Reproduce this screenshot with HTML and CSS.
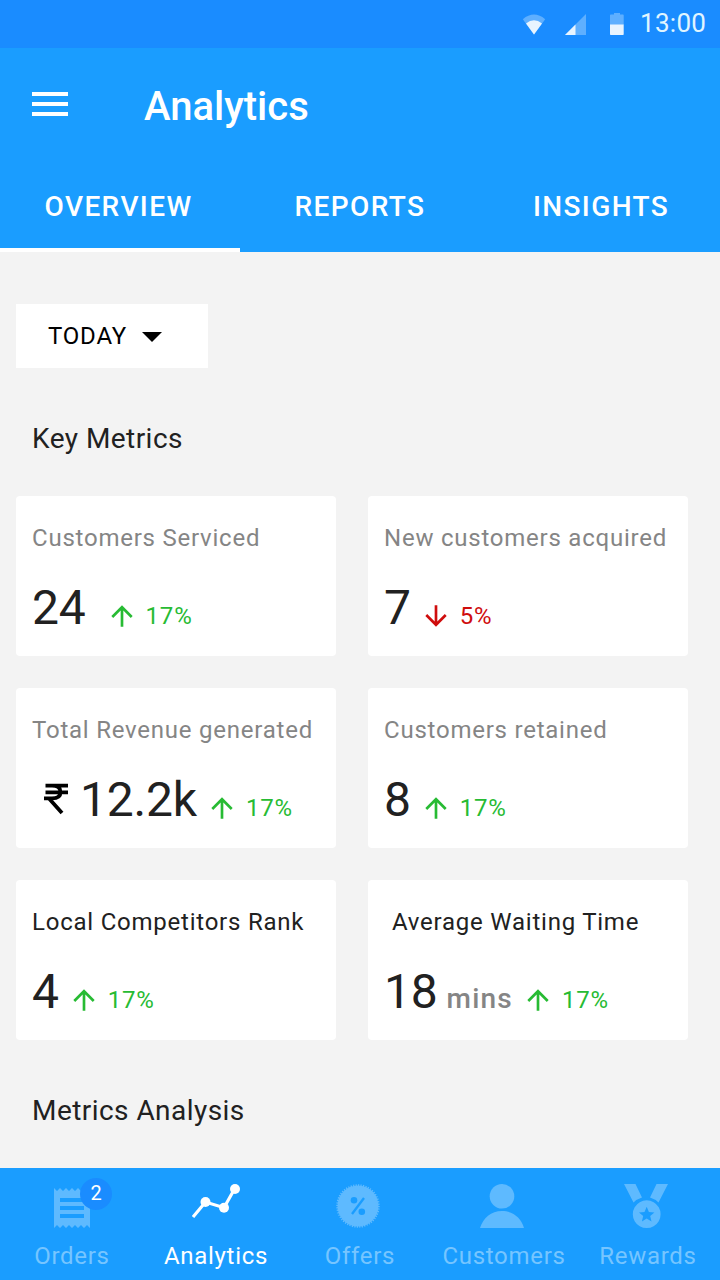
FILE: index.html
```html
<!DOCTYPE html>
<html lang="en">
<head>
<meta charset="utf-8">
<title>Analytics</title>
<link rel="stylesheet" href="styles.css">
</head>
<body>
<svg class="defs" width="0" height="0">
  <symbol id="arrow-up" viewBox="0 0 24 24"><path d="M4 12l1.41 1.41L11 7.83V20h2V7.83l5.58 5.59L20 12l-8-8z"/></symbol>
  <symbol id="arrow-down" viewBox="0 0 24 24"><path d="M20 12l-1.41-1.41L13 16.17V4h-2v12.17l-5.58-5.59L4 12l8 8z"/></symbol>
</svg>
<div class="screen">
  <div class="status-bar">
    <svg class="status-wifi" width="24" height="22" viewBox="0 0 24 22"><path class="dim" d="M.8 5.2Q12-4 23.2 5.2L12 20.5z"/><path class="lit" d="M4 9.500Q12 2.800 20 9.500L12 20.5z"/></svg>
    <svg class="status-signal" width="21" height="21" viewBox="0 0 21 21"><path class="dim" d="M21 0v21H0z"/><path class="lit" d="M10.500 10.500V21H0z"/></svg>
    <svg class="status-battery" width="14" height="22" viewBox="0 0 14 22"><path class="dim" d="M4 0h6v1.500h3q.7 0 .7.7V12H0V2.200q0-.7.700-.7H4z"/><path class="lit" d="M0 11.500h13.700v9.800q0 .7-.7.700H.7q-.7 0-.7-.7z"/></svg>
    <span class="clock">13:00</span>
  </div>
  <header class="app-bar">
    <svg class="menu" width="36" height="24" viewBox="0 0 36 24"><path d="M0 0h36v4H0zM0 10h36v4H0zM0 20h36v4H0z"/></svg>
    <h1 class="title">Analytics</h1>
  </header>
  <nav class="tabs">
    <a class="tab tab-active">OVERVIEW</a>
    <a class="tab">REPORTS</a>
    <a class="tab tab-last">INSIGHTS</a>
  </nav>
  <main class="content">
    <button class="period">TODAY<svg width="20" height="10" viewBox="0 0 20 10"><path d="M0 0h20L10 10z"/></svg></button>
    <h2 class="section-title">Key Metrics</h2>
    <section class="metrics">
      <article class="card">
        <div class="label">Customers Serviced</div>
        <div class="row"><span class="value value-wide">24</span><span class="trend up"><svg><use href="#arrow-up"/></svg>17%</span></div>
      </article>
      <article class="card">
        <div class="label">New customers acquired</div>
        <div class="row"><span class="value">7</span><span class="trend down"><svg><use href="#arrow-down"/></svg>5%</span></div>
      </article>
      <article class="card">
        <div class="label">Total Revenue generated</div>
        <div class="row"><svg class="rupee" width="24" height="32" viewBox="0 0 24 32"><path d="M1.500 2.700H24M1.500 9.300H24M0 15.400H8Q16.500 15.400 16.500 9Q16.500 2.700 8 2.700M5 15.400L18 30"/></svg><span class="value">12.2k</span><span class="trend up"><svg><use href="#arrow-up"/></svg>17%</span></div>
      </article>
      <article class="card">
        <div class="label">Customers retained</div>
        <div class="row"><span class="value">8</span><span class="trend up"><svg><use href="#arrow-up"/></svg>17%</span></div>
      </article>
      <article class="card">
        <div class="label label-dark">Local Competitors Rank</div>
        <div class="row"><span class="value">4</span><span class="trend up"><svg><use href="#arrow-up"/></svg>17%</span></div>
      </article>
      <article class="card">
        <div class="label label-dark label-indent">Average Waiting Time</div>
        <div class="row"><span class="value">18</span><span class="unit">mins</span><span class="trend up"><svg><use href="#arrow-up"/></svg>17%</span></div>
      </article>
    </section>
    <h2 class="section-title">Metrics Analysis</h2>
  </main>
  <nav class="bottom-nav">
    <a class="nav-item">
      <svg width="48" height="48" viewBox="0 0 48 48"><path fill-rule="evenodd" d="M6 4l3 3 3-3 3 3 3-3 3 3 3-3 3 3 3-3 3 3 3-3 3 3 3-3v40l-3-3-3 3-3-3-3 3-3-3-3 3-3-3-3 3-3-3-3 3-3-3-3 3zM12 14v4h24v-4zM12 22v4h24v-4zM12 30v4h24v-4z"/></svg>
      <span class="badge">2</span>
      <span class="nav-label">Orders</span>
    </a>
    <a class="nav-item nav-active">
      <svg width="48" height="48" viewBox="0 0 48 48"><path class="line" d="M1 33L13.500 18L32 23.700L42.500 5"/><circle cx="13.500" cy="18" r="5"/><circle cx="32" cy="23.700" r="5"/><circle cx="43" cy="5" r="5"/></svg>
      <span class="nav-label">Analytics</span>
    </a>
    <a class="nav-item">
      <svg width="48" height="48" viewBox="0 0 48 48"><circle cx="22" cy="22" r="20.500"/><circle class="teeth" cx="22" cy="22" r="20.500" pathLength="104"/><circle class="hole" cx="18" cy="16.300" r="3.300"/><circle class="hole" cx="25.800" cy="27.800" r="3.300"/><path class="slash" d="M28 14L16 30"/></svg>
      <span class="nav-label">Offers</span>
    </a>
    <a class="nav-item">
      <svg width="48" height="48" viewBox="0 0 48 48"><circle cx="22" cy="12.300" r="12.300"/><path d="M0 44C3 34 11 27 22 27S41 34 44 44z"/></svg>
      <span class="nav-label">Customers</span>
    </a>
    <a class="nav-item">
      <svg width="48" height="48" viewBox="0 0 48 48"><path d="M0 0H11.500L18 13.500Q13 15 9.500 18.500zM44 0H32.500L26 13.500Q31 15 34.500 18.500z"/><path fill-rule="evenodd" d="M22.700 16.300a13.900 13.900 0 1 0 .01 0zM22.700 22.800L24.900 27.900L30.400 28.400L26.200 32L27.500 37.400L22.700 34.500L17.900 37.400L19.200 32L15 28.400L20.500 27.900z"/></svg>
      <span class="nav-label">Rewards</span>
    </a>
  </nav>
</div>
</body>
</html>
```
FILE: styles.css
```css
* { box-sizing: border-box; }
body { margin: 0; background: #f3f3f3; font-family: Roboto, "Noto Sans", sans-serif; color: #212121; }
h1, h2 { margin: 0; }
.defs { position: absolute; }
.screen { display: flex; flex-direction: column; width: 720px; height: 1280px; overflow: hidden; }

.status-bar { display: flex; align-items: flex-start; height: 48px; padding: 0 0 0 522px; background: #1a8cff; fill: #fff; }
.status-wifi { margin: 14px 20px 0 0; }
.status-signal { margin: 14px 24px 0 -1px; }
.status-bar svg { flex: none; }
.status-battery { margin: 13px 16px 0 0; }
.dim { fill: #5eafff; }
.lit { fill: #e8f4ff; }
.clock { font-size: 26px; line-height: 46px; color: #e0f5ff; letter-spacing: .3px; }

.app-bar { display: flex; align-items: center; height: 112px; padding: 0 32px; background: #1a9dff; }
.menu { fill: #fff; }
.title { margin: 6px 0 0 76px; font-size: 40px; line-height: 48px; font-weight: 500; color: #fff; }

.tabs { display: grid; grid-template-columns: repeat(3, 1fr); grid-template-rows: 92px; height: 92px; background: #1a9dff; }
.tab { text-align: center; font-size: 28px; line-height: 94px; font-weight: 500; letter-spacing: 1.4px; color: #fff; }
.tab-active { height: 92px; padding-right: 3px; border-bottom: 4px solid #fff; }
.tab-last { padding-left: 2px; }

.content { flex: 1; padding: 52px 32px 0 16px; }
.period { display: flex; align-items: center; gap: 15px; width: 192px; height: 64px; padding: 0 0 0 32px; border: 0; background: #fff; color: #000; font: 400 24px/64px Roboto, sans-serif; letter-spacing: .8px; }
.period svg { margin-top: 1px; }
.section-title { padding-left: 16px; font-size: 28px; font-weight: 400; line-height: 40px; letter-spacing: .45px; margin: 51px 0 37px; }
.metrics { display: grid; grid-template-columns: 320px 320px; grid-auto-rows: 160px; gap: 32px; }
.card { padding: 26px 16px 0; background: #fff; border-radius: 4px; }
.label { font-size: 24px; line-height: 32px; letter-spacing: .77px; color: #858585; white-space: nowrap; }
.label-dark { color: #212121; }
.label-indent { padding-left: 8px; }
.row { display: flex; align-items: baseline; margin-top: 26px; white-space: nowrap; }
.value { margin-right: 9px; font-size: 48px; line-height: 56px; letter-spacing: -.2px; }
.value-wide { margin-right: 20px; }
.rupee { align-self: flex-start; margin: 11px 12px 0 12px; fill: none; stroke: #000; stroke-width: 3.800; }
.unit { margin-right: 9px; font-size: 28px; font-weight: 500; letter-spacing: 1.2px; color: #858585; }
.trend { display: flex; align-items: center; align-self: flex-end; gap: 8px; margin-bottom: 4px; font-size: 24px; line-height: 32px; letter-spacing: .8px; }
.trend svg { width: 32px; height: 32px; fill: currentColor; }
.up { color: #27bb33; }
.down { color: #cf0d0d; }

.bottom-nav { display: grid; grid-template-columns: repeat(5, 1fr); height: 112px; background: #1a9dff; }
.nav-item { position: relative; display: flex; flex-direction: column; align-items: center; padding-top: 16px; color: #76c5ff; fill: #5ebaff; }
.nav-label { margin-top: 8px; font-size: 24px; line-height: 32px; letter-spacing: .7px; }
.nav-active { color: #fff; fill: #fff; }
.badge { position: absolute; left: 80px; top: 10px; width: 32px; height: 32px; border-radius: 50%; background: #1a8cff; color: #fff; font-size: 20px; line-height: 31px; text-align: center; }
.line { fill: none; stroke: #fff; stroke-width: 3.200; }
.teeth { fill: none; stroke: #5ebaff; stroke-width: 2.500; stroke-dasharray: 1 1; }
.hole { fill: #1a9dff; }
.slash { stroke: #1a9dff; stroke-width: 2.300; }
```
